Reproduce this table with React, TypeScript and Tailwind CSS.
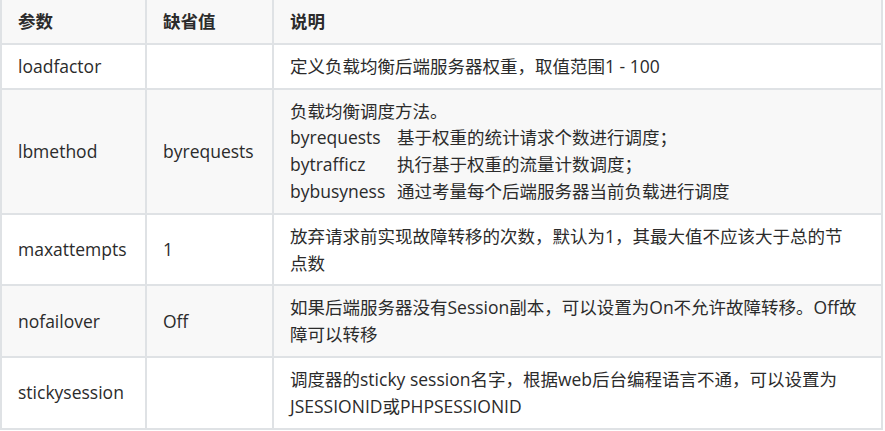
const rows = [
  { name: "loadfactor", def: "", desc: <>定义负载均衡后端服务器权重，取值范围1 - 100</> },
  {
    name: "lbmethod",
    def: "byrequests",
    desc: (
      <>
        负载均衡调度方法。
        <br />
        <span className="inline-block w-[107px]">byrequests</span>基于权重的统计请求个数进行调度；
        <br />
        <span className="inline-block w-[107px]">bytrafficz</span>执行基于权重的流量计数调度；
        <br />
        <span className="inline-block w-[107px]">bybusyness</span>通过考量每个后端服务器当前负载进行调度
      </>
    ),
  },
  {
    name: "maxattempts",
    def: "1",
    desc: (
      <>
        放弃请求前实现故障转移的次数，默认为1，其最大值不应该大于总的节
        <br />
        点数
      </>
    ),
  },
  {
    name: "nofailover",
    def: "Off",
    desc: (
      <>
        如果后端服务器没有Session副本，可以设置为On不允许故障转移。Off故
        <br />
        障可以转移
      </>
    ),
  },
  {
    name: "stickysession",
    def: "",
    desc: (
      <>
        调度器的sticky session名字，根据web后台编程语言不通，可以设置为
        <br />
        JSESSIONID或PHPSESSIONID
      </>
    ),
  },
]

export default function App() {
  return (
    <div
      className="w-[885px] h-[431px] bg-white overflow-hidden text-[#2b2b2b] text-[17.5px] leading-[26.8px]"
      style={{ fontFamily: '"Open Sans", "Noto Sans CJK SC", sans-serif' }}
    >
      <table className="w-[883px] table-fixed border-collapse">
        <colgroup>
          <col className="w-[145px]" />
          <col className="w-[127px]" />
          <col className="w-[609px]" />
        </colgroup>
        <thead>
          <tr className="bg-[#f8f8f8]">
            <th className="border-2 border-t-0 border-[#dfe2e5] px-4 py-2 text-left font-bold">参数</th>
            <th className="border-2 border-t-0 border-[#dfe2e5] px-4 py-2 text-left font-bold">缺省值</th>
            <th className="border-2 border-t-0 border-[#dfe2e5] px-4 py-2 text-left font-bold">说明</th>
          </tr>
        </thead>
        <tbody>
          {rows.map((r, i) => (
            <tr key={r.name} className={i % 2 === 1 ? "bg-[#f8f8f8]" : "bg-white"}>
              <td className="border-2 border-[#dfe2e5] px-4 py-2 align-middle">{r.name}</td>
              <td className="border-2 border-[#dfe2e5] px-4 py-2 align-middle">{r.def}</td>
              <td className="border-2 border-[#dfe2e5] px-4 py-2 align-middle">{r.desc}</td>
            </tr>
          ))}
        </tbody>
      </table>
    </div>
  )
}
